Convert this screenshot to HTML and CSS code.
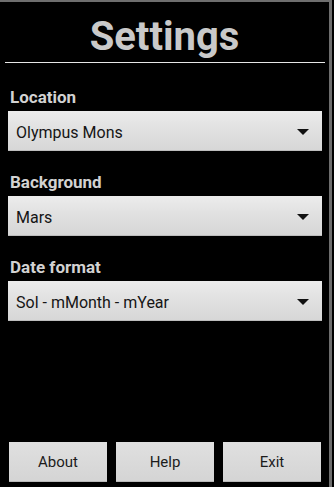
FILE: index.html
```html
<!DOCTYPE html>
<html>
<head>
<meta charset="utf-8">
<title>Settings</title>
<link rel="stylesheet" href="styles.css">
</head>
<body>
<div class="screen">
  <h1 class="title">Settings</h1>
  <div class="rule"></div>
  <div class="fields">
    <div class="field">
      <div class="label">Location</div>
      <div class="spinner"><span class="value">Olympus Mons</span><span class="arrow"></span></div>
    </div>
    <div class="field">
      <div class="label">Background</div>
      <div class="spinner"><span class="value">Mars</span><span class="arrow"></span></div>
    </div>
    <div class="field">
      <div class="label">Date format</div>
      <div class="spinner"><span class="value">Sol - mMonth - mYear</span><span class="arrow"></span></div>
    </div>
  </div>
  <div class="buttons">
    <div class="btn">About</div>
    <div class="btn">Help</div>
    <div class="btn">Exit</div>
  </div>
</div>
</body>
</html>
```

FILE: styles.css
```css
html, body {
  margin: 0;
  padding: 0;
  background: #000;
}
body {
  width: 334px;
  height: 487px;
  overflow: hidden;
  font-family: Roboto, "Liberation Sans", sans-serif;
}
.screen {
  width: 332px;
  height: 487px;
  box-sizing: border-box;
  border-top: 2px solid #6e6e6e;
  border-right: 3px solid #6e6e6e;
  background: #000;
  display: flex;
  flex-direction: column;
}
.title {
  margin: 11px 0 0;
  font-size: 40px;
  line-height: 47px;
  font-weight: 700;
  color: #c9c9c9;
  text-align: center;
}
.rule {
  margin: 2px 4px 0 5px;
  height: 1px;
  background: #e6e6e6;
}
.fields {
  display: flex;
  flex-direction: column;
  gap: 21px;
  padding: 24px 7px 0 8px;
}
.field {
  display: flex;
  flex-direction: column;
  gap: 4px;
}
.label {
  font-size: 17px;
  line-height: 20px;
  font-weight: 700;
  color: #d2d2d2;
  padding-left: 2px;
}
.spinner {
  height: 40px;
  box-sizing: border-box;
  display: flex;
  align-items: center;
  justify-content: space-between;
  padding: 2px 13px 0 8px;
  background: linear-gradient(#ececec 0%, #e2e2e2 40%, #d6d6d6 100%);
  box-shadow: inset 0 -1px 0 #bdbdbd;
}
.value {
  font-size: 16px;
  color: #151515;
}
.arrow {
  width: 0;
  height: 0;
  border-left: 6.5px solid transparent;
  border-right: 6.5px solid transparent;
  border-top: 6px solid #111;
  margin-top: -1px;
}
.buttons {
  margin-top: auto;
  margin-bottom: 5px;
  display: flex;
  gap: 9px;
  padding: 0 8px 0 9px;
}
.btn {
  flex: 1;
  height: 40px;
  display: flex;
  align-items: center;
  justify-content: center;
  font-size: 15px;
  color: #1c1c1c;
  background: linear-gradient(#e0e0e0, #d4d4d4);
  box-shadow: inset 0 -1px 0 #b8b8b8;
}
```
